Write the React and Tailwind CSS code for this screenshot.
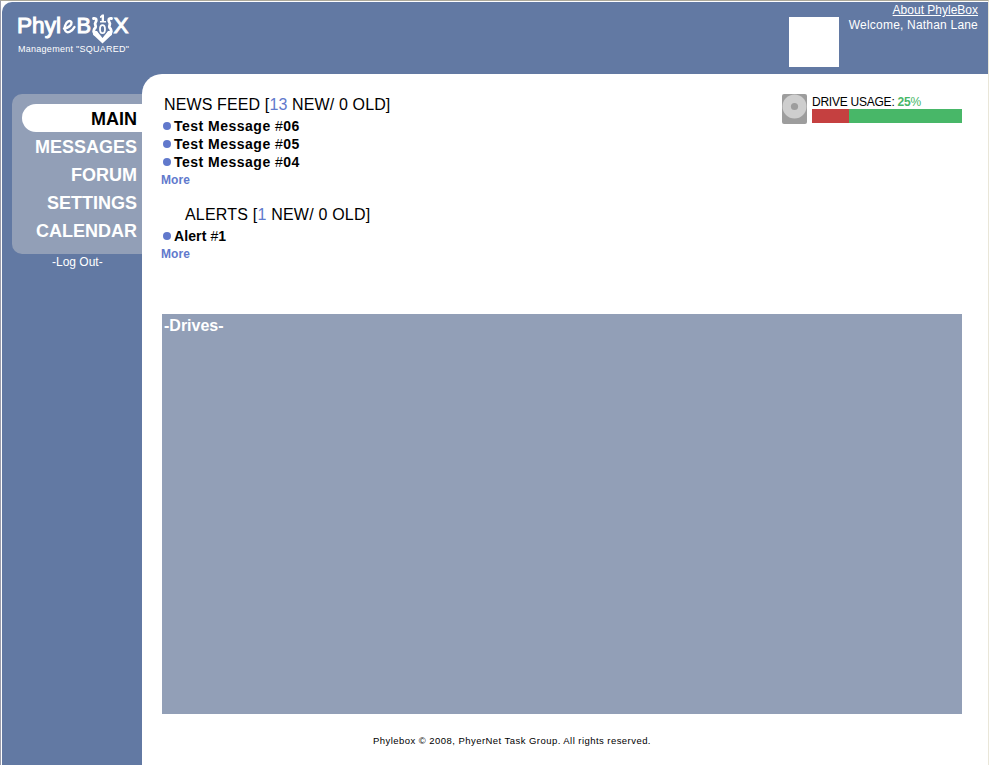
const menu = ['MESSAGES', 'FORUM', 'SETTINGS', 'CALENDAR'];
const messages = ['06', '05', '04'];

function Logo() {
  return (
    <svg className="block" width="120" height="34" viewBox="0 0 120 34" fill="#fff">
      <g fontFamily="'Liberation Sans', Arial, sans-serif" fontSize="22.500" stroke="#fff" strokeWidth="1">
        <text x="1" y="22" textLength="44" lengthAdjust="spacingAndGlyphs">Phyl</text>
        <text x="60.500" y="22" textLength="14.500" lengthAdjust="spacingAndGlyphs">B</text>
        <text x="97.500" y="22" textLength="15" lengthAdjust="spacingAndGlyphs">X</text>
      </g>
      <path d="M48 17.500C52.500 17 56 14 55.500 11.500C54.500 8.500 50 10.500 49 15C48 20 50.500 22 53.500 20.800C56 19.800 57.500 18 58.500 16" fill="none" stroke="#fff" strokeWidth="2.400" strokeLinecap="round" />
      <g fill="none" stroke="#fff" strokeWidth="2.800" strokeLinecap="round" strokeLinejoin="round">
        <path d="M77.500 7.500C80.500 7 81 9 79.500 11.500C78 13.500 80.500 14.500 79.500 16.500C77.500 18.500 77.500 21 78.500 23" />
        <path d="M95.500 7.500C92.500 7 92 9 93.500 11.500C95 13.500 92.500 14.500 93.500 16.500C95.500 18.500 95.500 21 94.500 23" />
      </g>
      <path d="M76.500 20H81L86.500 27L92 20H96.500L95.500 24L86.500 32.500L77.500 24Z" />
      <path d="M84 5.500L86 3.500H88V10H90V11.500H84V10H85.700V6.500L84 7Z" />
      <ellipse cx="86.500" cy="18.500" rx="4.600" ry="6" fill="#6279a3" />
      <ellipse cx="86.500" cy="18.200" rx="2.500" ry="4" fill="#6279a3" stroke="#fff" strokeWidth="1.800" />
    </svg>
  );
}

function Dot() {
  return <span className="mr-[3px] size-2 shrink-0 rounded-full bg-[#6179cc]" />;
}

function Item({ label, number, className }) {
  return (
    <li className={'flex h-[18px] items-center pl-px text-[14px] leading-[18px] font-bold ' + className}>
      <Dot />
      <span className="whitespace-pre">{label} <span className="font-normal">#</span>{number}</span>
    </li>
  );
}

function Header() {
  return (
    <header className="flex h-[72px] shrink-0 justify-between rounded-tl-[10px] bg-[#6279a3] text-white">
      <div className="pt-[9px] pl-[14px]">
        <Logo />
        <div className="-mt-[2px] pl-[2px] text-[9px] leading-[12px] tracking-[0.27px] whitespace-nowrap">Management "SQUARED"</div>
      </div>
      <div className="flex gap-[9px] pr-[10px]">
        <div className="mt-[15px] size-[50px] bg-white" />
        <div className="w-[130px] pt-px text-right text-[12px] leading-[15px] whitespace-nowrap">
          <div className="underline">About PhyleBox</div>
          <div className="tracking-[0.2px]">Welcome, Nathan Lane</div>
        </div>
      </div>
    </header>
  );
}

function Sidebar() {
  return (
    <aside className="w-[140px] shrink-0 bg-[#6279a3] pt-5 pl-[10px] text-white">
      <nav className="h-[160px] rounded-l-[10px] bg-[#929fb7] pt-[10px] pl-[10px] text-right text-[18px] leading-[30px] font-bold">
        <div className="h-7 rounded-l-full bg-white pr-[5px] text-black">MAIN</div>
        {menu.map((m) => <div key={m} className="h-7 pr-[5px]">{m}</div>)}
      </nav>
      <div className="pt-px pl-[40px] text-[12px] leading-[15px]">-Log Out-</div>
    </aside>
  );
}

function DriveUsage() {
  return (
    <div className="flex h-[30px] gap-[5px]">
      <svg width="25" height="30" viewBox="0 0 25 30">
        <rect width="25" height="30" rx="2" fill="#9d9d9d" />
        <circle cx="12.500" cy="12.500" r="12" fill="#cecece" />
        <circle cx="12.500" cy="12.500" r="3.600" fill="#9d9d9d" />
      </svg>
      <div className="w-[150px]">
        <div className="h-[15px] text-[12px] leading-[17px] tracking-[-0.24px] whitespace-nowrap">DRIVE USAGE: <span className="font-bold text-[#48b768]">25<span className="font-normal">%</span></span></div>
        <div className="flex h-[14px] bg-[#48b768]"><div className="w-[37px] bg-[#c54040]" /></div>
      </div>
    </div>
  );
}

export default function App() {
  return (
    <div className="flex h-[765px] w-[989px] flex-col overflow-hidden border-t border-r border-l border-t-[#aca899] border-r-[#e9e6d8] border-l-[#999baa] bg-white pt-px pl-px font-['Liberation_Sans',Arial,sans-serif] text-black">
      <Header />
      <div className="flex grow bg-[linear-gradient(to_right,#6279a3_160px,white_160px)]">
        <Sidebar />
        <main className="flex grow flex-col rounded-tl-[20px] bg-white pt-5 pr-[26px] pl-5">
          <div className="flex h-[220px] justify-between">
            <div>
              <h1 className="h-[23px] pl-[2px] text-[16px] leading-[22px] tracking-[0.13px]">NEWS FEED [<span className="text-[#6179cc]">13</span> NEW/ 0 OLD]</h1>
              <ul>{messages.map((n) => <Item key={n} label="Test Message" number={n} className="tracking-[0.49px]" />)}</ul>
              <div className="-ml-px text-[12px] leading-[18px] font-bold tracking-[0.1px] text-[#6179cc]">More</div>
              <h1 className="mt-[15px] h-[23px] pl-[23px] text-[16px] leading-[22px] tracking-[0.2px]">ALERTS [<span className="text-[#6179cc]">1</span> NEW/ 0 OLD]</h1>
              <ul><Item label="Alert" number="1" className="tracking-[0.1px]" /></ul>
              <div className="-ml-px text-[12px] leading-[18px] font-bold tracking-[0.1px] text-[#6179cc]">More</div>
            </div>
            <DriveUsage />
          </div>
          <section className="h-[400px] bg-[#929fb7] pt-[2px] pl-[2px] text-[16px] leading-[19px] font-bold text-white">-Drives-</section>
          <footer className="pt-[20px] pr-[100px] text-center text-[9.5px] leading-[14px] tracking-[0.45px]">Phylebox © 2008, PhyerNet Task Group. All rights reserved.</footer>
        </main>
      </div>
    </div>
  );
}
